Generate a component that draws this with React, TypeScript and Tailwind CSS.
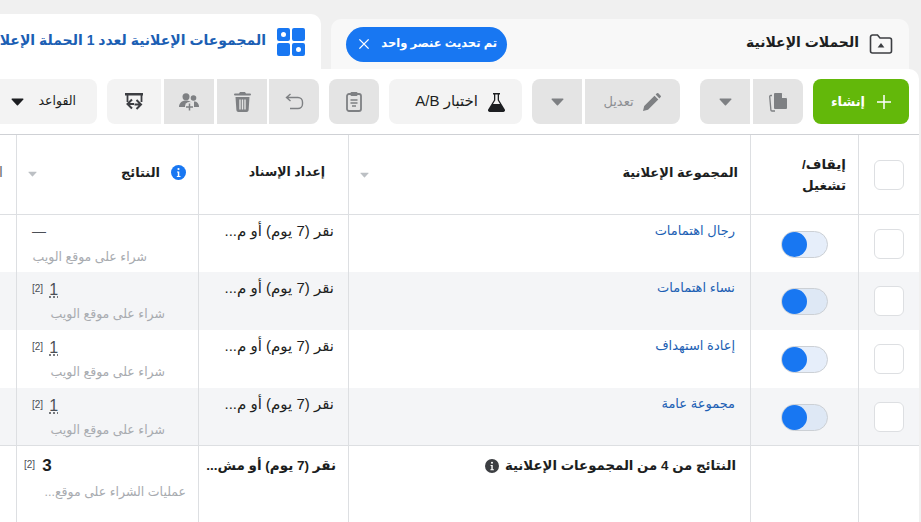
import React from "react";

const F = "font-['Liberation_Sans','DejaVu_Sans',sans-serif]";

const Caret = ({ c = "#65676b", w = 13 }: { c?: string; w?: number }) => (
  <svg width={w} height={Math.round((w * 8) / 13)} viewBox="0 0 13 8"><path d="M1 .6h11a.6.6 0 0 1 .4 1L7 7.200a.8.8 0 0 1-1.100 0L.6 1.600A.6.6 0 0 1 1 .6z" fill={c} /></svg>
);

const Btn = ({ w, children, dis = false, cls = "" }: { w: string; children?: React.ReactNode; dis?: boolean; cls?: string }) => (
  <div className={`h-[45px] shrink-0 flex items-center justify-center ${w} ${dis ? "bg-[#e4e4e4]" : "bg-[#f3f3f3]"} ${cls}`}>{children}</div>
);

const Toggle = ({ alt }: { alt?: boolean }) => (
  <div dir="ltr" className={`relative w-[47px] h-[27px] rounded-full border border-[#ccd0d5] ${alt ? "bg-[#dee8f5]" : "bg-[#e6eefa]"}`}>
    <div className="absolute left-0 top-0 w-[25px] h-[25px] rounded-full bg-[#1877f2]" />
  </div>
);

const Check = () => <div className="w-[30px] h-[30px] rounded-[6px] border border-[#dddfe2] bg-white" />;

const GRID = "grid grid-cols-[60px_108px_402px_150px_182px_17px]";

const Row = ({ name, alt, dash, h }: { name: string; alt?: boolean; dash?: boolean; h: string }) => (
  <div className={`${GRID} ${h} ${alt ? "bg-[#f4f5f7]" : "bg-white"}`}>
    <div className="flex items-center justify-start pr-[15px]"><Check /></div>
    <div className="border-r border-[#dddfe2] flex items-center justify-center pt-[1px]"><Toggle alt={alt} /></div>
    <div className="border-r border-[#dddfe2] pr-[15px] pt-[6px] text-[13px] leading-[20px] text-[#1c5fb4]">{name}</div>
    <div className="border-r border-[#dddfe2] pr-[14px] pt-[6px] text-[15px] leading-[20px] text-[#1c1e21] whitespace-nowrap">نقر (7 يوم) أو م...</div>
    <div className={`border-r border-[#dddfe2] ${dash ? "pt-[8px]" : "pt-[10px]"}`}>
      {dash ? (
        <div dir="ltr" className="pl-[15px] text-[14px] leading-[16px] text-[#4b4f56]">—</div>
      ) : (
        <div dir="ltr" className="pl-[15px] flex items-start text-[#4b4f56] leading-[16px]">
          <span className="text-[10px] leading-[14px]">[2]</span>
          <span className="ml-[6px] text-[16px] leading-[16px] underline decoration-dotted underline-offset-2">1</span>
        </div>
      )}
      <div className={`text-[12.500px] leading-[16px] text-[#a8abb0] whitespace-nowrap ${dash ? "mt-[10px] pr-[51px]" : "mt-[8px] pr-[33px]"}`}>شراء على موقع الويب</div>
    </div>
    <div className="border-r border-[#dddfe2]" />
  </div>
);

export default function App() {
  return (
    <div dir="rtl" className={`${F} w-[921px] h-[522px] overflow-hidden bg-[#f0f0f0] flex flex-col`}>
      {/* tabs */}
      <div className="flex items-end gap-[10px] pr-[12px] pt-[14px] h-[69px] shrink-0">
        <div className="w-[578px] h-[50px] shrink-0 rounded-t-[10px] bg-[#f8f8f8] flex items-center pl-[15px] pr-[16px]">
          <svg width="24" height="22" viewBox="0 0 24 22" fill="none" className="shrink-0"><path d="M1.500 4a2 2 0 0 1 2-2h5l2.500 3h9.500a2 2 0 0 1 2 2v11a2 2 0 0 1-2 2h-17a2 2 0 0 1-2-2z" stroke="#3c3e42" strokeWidth="1.600" /><path d="M12 10l3.400 4.400H8.600z" fill="#3c3e42" /></svg>
          <span className="mr-[10px] -mt-[3px] text-[14px] font-bold text-[#1c1e21]">الحملات الإعلانية</span>
          <div className="mr-auto h-[35px] w-[161px] rounded-full bg-[#1877f2] text-white flex items-center justify-between pr-[10px] pl-[12px] text-[11.500px] font-bold whitespace-nowrap">
            <span>تم تحديث عنصر واحد</span>
            <svg width="12" height="12" viewBox="0 0 13 13" className="shrink-0"><path d="M1.500 1.500l10 10M11.500 1.500l-10 10" stroke="#fff" strokeWidth="1.500" /></svg>
          </div>
        </div>
        <div className="w-[360px] h-[55px] shrink-0 rounded-t-[10px] bg-white flex items-center pr-[16px]">
          <svg width="28" height="28" viewBox="0 0 28 28" className="shrink-0">
            <path fillRule="evenodd" fill="#1877f2" d="M2 0h9a2 2 0 0 1 2 2v9a2 2 0 0 1-2 2H2a2 2 0 0 1-2-2V2a2 2 0 0 1 2-2zm4.500 4a2.500 2.500 0 1 0 0 5 2.500 2.500 0 0 0 0-5zM17 0h9a2 2 0 0 1 2 2v9a2 2 0 0 1-2 2h-9a2 2 0 0 1-2-2V2a2 2 0 0 1 2-2zM2 15h9a2 2 0 0 1 2 2v9a2 2 0 0 1-2 2H2a2 2 0 0 1-2-2v-9a2 2 0 0 1 2-2zM17 15h9a2 2 0 0 1 2 2v9a2 2 0 0 1-2 2h-9a2 2 0 0 1-2-2v-9a2 2 0 0 1 2-2zm4.500 4a2.500 2.500 0 1 0 0 5 2.500 2.500 0 0 0 0-5z" />
          </svg>
          <span className="mr-[11px] -mt-[2px] text-[14px] font-bold text-[#1c5fb4] whitespace-nowrap">المجموعات الإعلانية لعدد 1 الحملة الإعلانية</span>
        </div>
      </div>

      {/* toolbar */}
      <div className="mr-[2px] h-[66px] shrink-0 bg-white rounded-tr-[10px] flex items-center pr-[10px] border-b border-[#cfd1d5] whitespace-nowrap">
        <Btn w="w-[96px]" cls="rounded-[8px] !bg-[#63b80a] text-white text-[13px] font-bold gap-[12px]">
          <svg width="14" height="14" viewBox="0 0 14 14"><path d="M7 0v14M0 7h14" stroke="#fff" strokeWidth="1.500" /></svg>
          <span>إنشاء</span>
        </Btn>
        <Btn w="w-[50px]" dis cls="mr-[10px] rounded-r-[8px]">
          <svg width="20" height="20" viewBox="0 0 20 20" fill="#7e8083"><path d="M7 1h6.500L19 6.500V16a1 1 0 0 1-1 1H7a1 1 0 0 1-1-1V2a1 1 0 0 1 1-1z" /><path d="M14 1l5 5h-5z" fill="#e4e4e4" /><path d="M4 3.500H2.700a1 1 0 0 0-1 1.100l1.200 13.500a1 1 0 0 0 1 .9H7" fill="none" stroke="#7e8083" strokeWidth="1.300" /></svg>
        </Btn>
        <Btn w="w-[50px]" dis cls="mr-[3px] rounded-l-[8px]"><Caret c="#7e8083" /></Btn>
        <Btn w="w-[95px]" dis cls="mr-[20px] rounded-r-[8px] gap-[8px] text-[13px] text-[#8d8f93]">
          <svg width="20" height="20" viewBox="0 0 20 20" fill="#7e8083"><path d="M1 19l1.200-5L12.500 3.700l3.800 3.800L6 17.800zM13.600 2.600l1.300-1.300a1 1 0 0 1 1.400 0l2.400 2.400a1 1 0 0 1 0 1.400l-1.300 1.300z" /></svg>
          <span>تعديل</span>
        </Btn>
        <Btn w="w-[50px]" dis cls="mr-[3px] rounded-l-[8px]"><Caret c="#7e8083" /></Btn>
        <Btn w="w-[133px]" cls="mr-[10px] rounded-[8px] justify-start pr-[16px] gap-[9px] text-[15px] text-[#1c1e21]">
          <svg width="19" height="20" viewBox="0 0 19 20" className="shrink-0"><path d="M6 1h7v1.500h-1V8l5.700 9.200A1.800 1.800 0 0 1 16.200 20H2.800a1.800 1.800 0 0 1-1.500-2.800L7 8V2.500H6z" fill="#1c1e21" /><path d="M8.300 2.500h2.400v5.800l2.300 3.700H6l2.300-3.700z" fill="#f3f3f3" /></svg>
          <span>اختبار A/B</span>
        </Btn>
        <Btn w="w-[50px]" dis cls="mr-[10px] rounded-[8px]">
          <svg width="16" height="21" viewBox="0 0 16 21" fill="none"><rect x="1" y="3" width="14" height="17" rx="2" stroke="#7e8083" strokeWidth="1.800" /><rect x="4.500" y="1" width="7" height="4" rx="1" fill="#7e8083" /><path d="M4.500 9h7M4.500 12h7M6 15h4" stroke="#7e8083" strokeWidth="1.300" /></svg>
        </Btn>
        <Btn w="w-[50px]" dis cls="mr-[10px] rounded-r-[8px]">
          <svg width="19" height="18" viewBox="0 0 19 18" fill="none"><path d="M5.500 1L1.500 4.500 5.500 8M2 4.500h11a4.500 4.500 0 0 1 4.500 4.500v2a4.500 4.500 0 0 1-4.500 4.500H5" stroke="#7e8083" strokeWidth="1.400" /></svg>
        </Btn>
        <Btn w="w-[50px]" dis cls="mr-[2px]">
          <svg width="17" height="20" viewBox="0 0 17 20" fill="#7e8083"><path d="M6 0h5l1 1.500h4a1 1 0 0 1 0 2H1a1 1 0 0 1 0-2h4z" /><path fillRule="evenodd" d="M1.500 5h14l-.9 13.200A2 2 0 0 1 12.600 20H4.400a2 2 0 0 1-2-1.800zM5.300 7.500v10h1.400v-10zM7.800 7.500v10h1.400v-10zM10.300 7.500v10h1.400v-10z" /></svg>
        </Btn>
        <Btn w="w-[50px]" dis cls="mr-[3px]">
          <svg width="20" height="18" viewBox="0 0 20 18" fill="#7e8083"><circle cx="7" cy="3.700" r="3.500" /><circle cx="14.500" cy="5" r="2.800" /><path d="M0 14c0-4 3-6.500 7-6.500s7 2.500 7 6.500H0z" /><path d="M15 8.500c3 0 5 2 5 5.500h-5z" /><circle cx="10.500" cy="13.500" r="4.500" fill="#e4e4e4" /><path d="M10.500 10.500v7M7 14h7" stroke="#7e8083" strokeWidth="1.500" fill="none" /></svg>
        </Btn>
        <Btn w="w-[54px]" cls="mr-[3px] rounded-l-[8px]">
          <svg width="20" height="20" viewBox="0 0 20 20" fill="none"><path d="M3.500 10V2h14v8" stroke="#3c3e42" strokeWidth="1.800" /><path d="M1 1h18v2.500H1z" fill="#3c3e42" /><path d="M8 7.500L3.500 12 8 16.500M4 12h6M12.500 8l4.500 4.500L12.500 17M16.500 12.500h-6" stroke="#3c3e42" strokeWidth="2" /></svg>
        </Btn>
        <Btn w="w-[130px]" cls="mr-[10px] rounded-[8px] justify-start pr-[21px] gap-[14px] text-[12.500px] text-[#1c1e21]">
          <span>القواعد</span>
          <Caret c="#1c1e21" />
        </Btn>
      </div>

      {/* table */}
      <div className="flex-1 mr-[2px] bg-white text-[#1c1e21]">
        <div className={`${GRID} h-[79px] bg-white`}>
          <div className="flex items-center justify-start pr-[15px]"><Check /></div>
          <div className="border-r border-[#dddfe2] pr-[12px] pt-[19px] text-[13.500px] leading-[21px] font-bold">إيقاف/<br />تشغيل</div>
          <div className="border-r border-[#dddfe2] pr-[12px] pl-[11px] pt-[28px] flex justify-between items-start text-[13px] leading-[19px] font-bold">
            <span>المجموعة الإعلانية</span>
            <span className="pt-[9px]"><Caret c="#bcc0c4" w={9} /></span>
          </div>
          <div className="border-r border-[#dddfe2] pr-[23px] pt-[28px] text-[12.500px] leading-[19px] font-bold">إعداد الإسناد</div>
          <div className="border-r border-[#dddfe2] pr-[12px] pl-[11px] pt-[28px] flex justify-between items-start text-[13px] leading-[19px] font-bold">
            <span className="flex items-center gap-[11px]">
              <svg width="15" height="15" viewBox="0 0 15 15" className="shrink-0"><circle cx="7.500" cy="7.500" r="7.500" fill="#1877f2" /><circle cx="7.500" cy="4" r="1.100" fill="#fff" /><path d="M6 6.500h2.300V11H9.500v1H5.800v-1h1V7.500H6z" fill="#fff" /></svg>
              <span>النتائج</span>
            </span>
            <span className="pt-[8px]"><Caret c="#bcc0c4" w={9} /></span>
          </div>
          <div className="border-r border-[#dddfe2] pr-[13px] pt-[28px] text-[14px] leading-[19px]"><span className="text-[#65676b]">ا</span></div>
        </div>
        <div className="border-t border-[#dddfe2]">
          <Row name="رجال اهتمامات" dash h="h-[57px]" />
          <Row name="نساء اهتمامات" alt h="h-[58px]" />
          <Row name="إعادة استهداف" h="h-[58px]" />
          <Row name="مجموعة عامة" alt h="h-[57px]" />
        </div>
        <div className={`${GRID} h-[77px] border-t border-[#dddfe2] bg-white`}>
          <div />
          <div className="border-r border-[#dddfe2]" />
          <div className="border-r border-[#dddfe2] pr-[14px] pt-[10px] text-[13.300px] leading-[20px] font-bold flex items-start gap-[6px]">
            <span>النتائج من 4 من المجموعات الإعلانية</span>
            <svg width="14" height="14" viewBox="0 0 15 15" className="shrink-0 mt-[3px]"><circle cx="7.500" cy="7.500" r="7.500" fill="#3c3e42" /><circle cx="7.500" cy="4" r="1.100" fill="#fff" /><path d="M6 6.500h2.300V11H9.500v1H5.800v-1h1V7.500H6z" fill="#fff" /></svg>
          </div>
          <div className="border-r border-[#dddfe2] pr-[12px] pt-[10px] text-[13.500px] leading-[20px] font-bold whitespace-nowrap">نقر (7 يوم) أو مش...</div>
          <div className="border-r border-[#dddfe2] pr-[12px] pt-[12px]">
            <div dir="ltr" className="pl-[7px] flex items-start">
              <span className="text-[10px] leading-[14px] text-[#4b4f56]">[2]</span>
              <span className="ml-[7px] text-[17px] leading-[16px] font-bold">3</span>
            </div>
            <div className="mt-[10px] text-[12.500px] leading-[16px] text-[#a8abb0] whitespace-nowrap">عمليات الشراء على موقع...</div>
          </div>
          <div className="border-r border-[#dddfe2]" />
        </div>
      </div>
    </div>
  );
}
